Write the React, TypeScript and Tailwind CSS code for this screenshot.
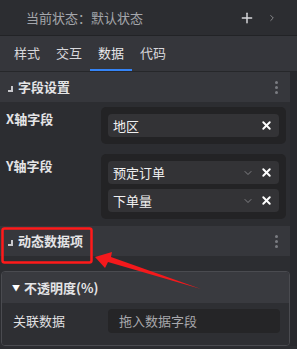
import React from 'react'
import { Plus, ChevronRight, ChevronDown, X } from 'lucide-react'

const font = { fontFamily: '"Noto Sans CJK SC", "Noto Sans", sans-serif' }

const Dots = () => (
  <div className="flex flex-col gap-[2px]">
    <span className="w-[3px] h-[3px] rounded-full bg-[#7a7c82]" />
    <span className="w-[3px] h-[3px] rounded-full bg-[#7a7c82]" />
    <span className="w-[3px] h-[3px] rounded-full bg-[#7a7c82]" />
  </div>
)

const SectionHeader = ({ title }: { title: string }) => (
  <div className="h-[30px] bg-[#36373c] flex items-center justify-between pl-[8px] pr-[12px]">
    <div className="flex items-center gap-[5px] text-[13px] font-bold text-[#e4e4e6]">
      <span className="w-[5px] h-[6px] mt-[3px] border-r-2 border-b-2 border-[#c8c8cc]" />
      <span>{title}</span>
    </div>
    <Dots />
  </div>
)

const Item = ({ label, select }: { label: string; select?: boolean }) => (
  <div className="h-[23px] rounded-[4px] bg-[#333336] flex items-center pl-[5px] pr-[6px]">
    <span className="flex-1 text-[13px] text-[#f0f0f0]">{label}</span>
    {select && <ChevronDown size={12} strokeWidth={1.5} className="text-[#9a9a9e] mr-[6px]" />}
    <X size={13} strokeWidth={3.5} className="text-white" />
  </div>
)

export default function App() {
  const tabs = ['样式', '交互', '数据', '代码']
  return (
    <div style={font} className="relative w-[297px] h-[349px] overflow-hidden bg-[#2c2d31] text-[#e4e4e6]">
      <div className="h-[36px] flex items-center justify-between pl-[26px] pr-[20px] border-b border-[#222326]">
        <span className="text-[13px] text-[#a4a6ab]">当前状态：默认状态</span>
        <div className="flex items-center gap-[12px]">
          <Plus size={16} strokeWidth={2.2} className="text-[#d8d8dc]" />
          <ChevronRight size={10} strokeWidth={2} className="text-[#9a9a9e]" />
        </div>
      </div>
      <div className="h-[36px] bg-[#35363b] flex items-end pl-[6px] border-b border-[#26272a]">
        {tabs.map((t) => (
          <div
            key={t}
            className={`h-full px-[8px] flex items-center text-[13px] border-b-2 ${
              t === '数据' ? 'border-[#3584f7] text-[#e8e8ea]' : 'border-transparent text-[#d8d8dc]'
            }`}
          >
            {t}
          </div>
        ))}
      </div>
      <div className="flex">
        <div className="w-[290px] shrink-0">
          <SectionHeader title="字段设置" />
          <div className="flex pt-[5px] pl-[6px] pr-[4px]">
            <div className="w-[95px] text-[13px] font-bold pt-[2px]">X轴字段</div>
            <div className="flex-1 rounded-[5px] bg-[#232325] p-[7px] flex flex-col gap-[5px]">
              <Item label="地区" />
            </div>
          </div>
          <div className="flex pt-[10px] pl-[6px] pr-[4px]">
            <div className="w-[95px] text-[13px] font-bold pt-[2px]">Y轴字段</div>
            <div className="flex-1 rounded-[5px] bg-[#232325] p-[7px] flex flex-col gap-[5px]">
              <Item label="预定订单" select />
              <Item label="下单量" select />
            </div>
          </div>
          <div className="h-[7px]" />
          <SectionHeader title="动态数据项" />
          <div className="h-[15px]" />
          <div className="ml-[1px] rounded-[4px] border border-[#4a4b50] overflow-hidden">
            <div className="h-[31px] bg-[#393a3f] flex items-center pl-[10px] gap-[4px] text-[13px] font-bold">
              <span className="text-[8px] text-white">▼</span>
              <span>不透明度(%)</span>
            </div>
            <div className="bg-[#2e2f33] flex items-center pl-[11px] pr-[9px] pt-[6px] pb-[12px]">
              <span className="w-[95px] text-[13px] text-[#e0e0e2]">关联数据</span>
              <div className="flex-1 h-[24px] rounded-[4px] bg-[#252527] flex items-center pl-[11px] text-[13px] text-[#a8a8ac]">
                拖入数据字段
              </div>
            </div>
          </div>
        </div>
        <div className="flex-1 bg-[#28292d]" />
      </div>
      <svg className="absolute left-0 top-0 pointer-events-none" width="297" height="349">
        <rect x="2.5" y="228.5" width="89" height="34" rx="2" fill="none" stroke="#ff1a1a" strokeWidth="2.5" />
        <polygon points="95,257 112,252 111,257 201,289 108,262 105,268" fill="#f4191c" />
      </svg>
    </div>
  )
}
